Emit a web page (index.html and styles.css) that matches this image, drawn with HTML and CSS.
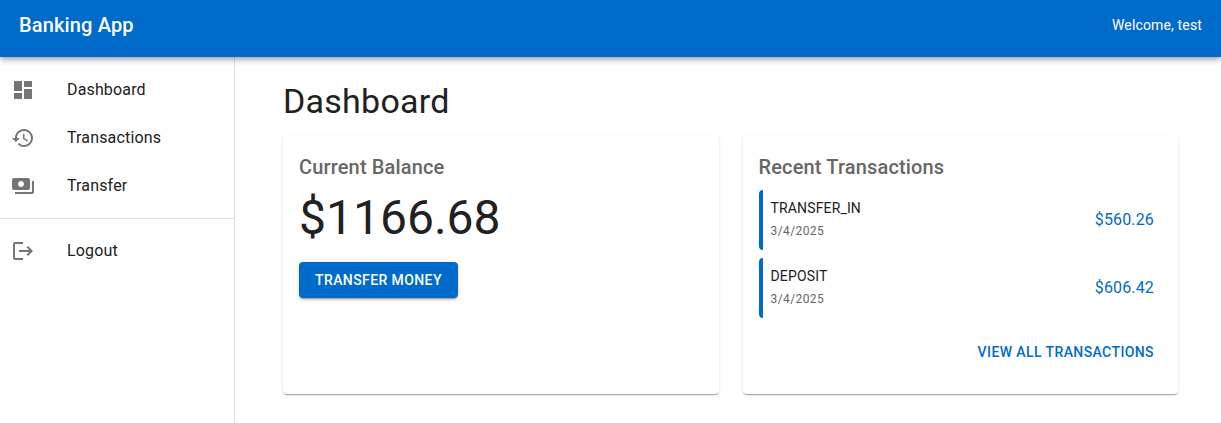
FILE: index.html
```html
<!DOCTYPE html>
<html lang="en">
<head>
<meta charset="utf-8">
<title>Banking App</title>
<link rel="stylesheet" href="styles.css">
</head>
<body>
<header class="appbar"><div class="brand">Banking App</div><div class="welcome">Welcome, test</div></header>
<div class="layout">
<nav class="sidebar">
<a class="item"><svg class="icon" viewBox="0 0 24 24"><path d="M3 13h8V3H3v10zm0 8h8v-6H3v6zm10 0h8V11h-8v10zm0-18v6h8V3h-8z"/></svg><span class="label">Dashboard</span></a>
<a class="item"><svg class="icon" viewBox="0 0 24 24"><path d="M13 3c-4.97 0-9 4.03-9 9H1l3.89 3.89.07.14L9 12H6c0-3.87 3.13-7 7-7s7 3.13 7 7-3.13 7-7 7c-1.93 0-3.68-.79-4.94-2.06l-1.42 1.42C8.27 19.99 10.51 21 13 21c4.97 0 9-4.03 9-9s-4.03-9-9-9zm-1 5v5l4.28 2.54.72-1.21-3.5-2.08V8H12z"/></svg><span class="label">Transactions</span></a>
<a class="item"><svg class="icon" viewBox="0 0 24 24"><path d="M19 14V6c0-1.100-.9-2-2-2H3c-1.100 0-2 .9-2 2v8c0 1.100.9 2 2 2h14c1.100 0 2-.9 2-2zm-9-1c-1.660 0-3-1.340-3-3s1.340-3 3-3 3 1.340 3 3-1.340 3-3 3zm13-6v11c0 1.100-.9 2-2 2H4v-2h17V7h2z"/></svg><span class="label">Transfer</span></a>
<hr class="divider">
<a class="item"><svg class="icon" viewBox="0 0 24 24"><path d="M17 7l-1.410 1.410L18.170 11H8v2h10.170l-2.580 2.580L17 17l5-5zM4 5h8V3H4c-1.100 0-2 .9-2 2v14c0 1.100.9 2 2 2h8v-2H4V5z"/></svg><span class="label">Logout</span></a>
</nav>
<main class="main">
<h1 class="title">Dashboard</h1>
<div class="cards">
<section class="card">
<h2 class="heading">Current Balance</h2>
<div class="balance">$1166.68</div>
<button class="primary">TRANSFER MONEY</button>
</section>
<section class="card">
<h2 class="heading">Recent Transactions</h2>
<div class="row"><div class="details"><div class="kind">TRANSFER_IN</div><div class="date">3/4/2025</div></div><div class="amount">$560.26</div></div>
<div class="row"><div class="details"><div class="kind">DEPOSIT</div><div class="date">3/4/2025</div></div><div class="amount">$606.42</div></div>
<div class="actions"><a class="view-all">VIEW ALL TRANSACTIONS</a></div>
</section>
</div>
</main>
</div>
</body>
</html>
```
FILE: styles.css
```css
* { box-sizing: border-box; }
body { margin: 0; height: 423px; overflow: hidden; display: flex; flex-direction: column; background: #fff; color: #212121; font-family: Roboto, "Liberation Sans", sans-serif; }
.appbar { position: relative; z-index: 1; flex: 0 0 57px; display: flex; justify-content: space-between; align-items: center; padding: 0 19px 7px; background: #006bc9; color: #fff; box-shadow: 0 2px 4px -1px rgba(0,0,0,.2), 0 4px 5px rgba(0,0,0,.14), 0 1px 10px rgba(0,0,0,.12); }
.brand { font-size: 20px; font-weight: 500; letter-spacing: .15px; }
.welcome { font-size: 14px; letter-spacing: .15px; }
.layout { flex: 1; display: flex; min-height: 0; }
.sidebar { width: 235px; padding-top: 9px; border-right: 1px solid #e0e0e0; }
.item { height: 48px; display: flex; align-items: center; padding-left: 11px; font-size: 16px; letter-spacing: .15px; }
.icon { width: 24px; height: 24px; margin-right: 32px; fill: #757575; }
.label { padding-bottom: 2px; }
.divider { margin: 8px 0; border: 0; border-top: 1px solid #e0e0e0; }
.main { flex: 1; padding: 23px 43px 0 48px; }
.title { margin: 0 0 13px; font-size: 34px; line-height: 42px; font-weight: 400; letter-spacing: .25px; }
.cards { display: grid; grid-template-columns: 1fr 1fr; gap: 24px; }
.card { height: 259px; padding: 16px; border-radius: 4px; box-shadow: 0 2px 1px -1px rgba(0,0,0,.2), 0 1px 1px rgba(0,0,0,.14), 0 1px 3px rgba(0,0,0,.12); }
.heading { margin: 0 0 7px; font-size: 20px; line-height: 32px; font-weight: 500; letter-spacing: .15px; color: #666; }
.balance { font-size: 48px; line-height: 56px; margin-bottom: 16px; }
.primary { height: 36px; padding: 0 16px; border: 0; border-radius: 4px; background: #006bc9; color: #fff; font: 500 14px Roboto, sans-serif; letter-spacing: .4px; box-shadow: 0 3px 1px -2px rgba(0,0,0,.2), 0 2px 2px rgba(0,0,0,.14), 0 1px 5px rgba(0,0,0,.12); }
.row { height: 60px; margin-bottom: 8px; display: flex; justify-content: space-between; align-items: center; padding: 0 8px; border-left: 4px solid #006bc9; border-radius: 4px; }
.details { align-self: flex-start; display: grid; gap: 3px; padding-top: 8px; }
.kind { font-size: 14px; line-height: 20px; letter-spacing: .15px; }
.date { font-size: 12px; line-height: 20px; letter-spacing: .4px; color: #666; }
.amount { padding-bottom: 2px; font-size: 16px; letter-spacing: .15px; color: #006bc9; }
.actions { display: flex; justify-content: flex-end; padding: 14px 8px 0; }
.view-all { font-size: 14px; line-height: 24px; font-weight: 500; letter-spacing: .4px; color: #006bc9; }
```
